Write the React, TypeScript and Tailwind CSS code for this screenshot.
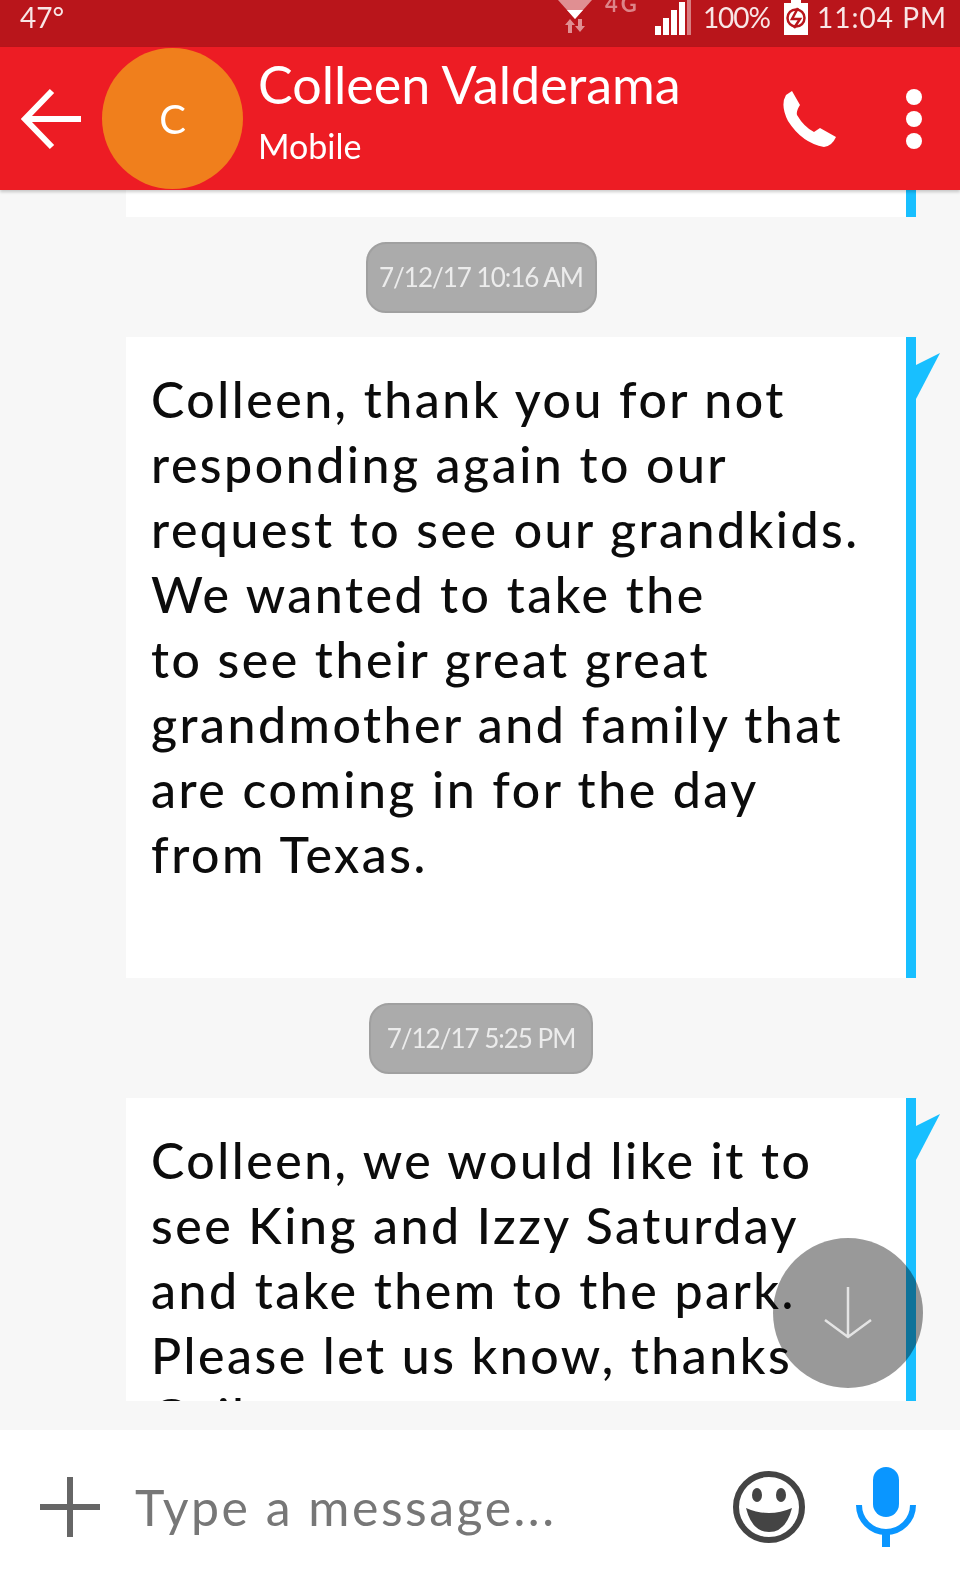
const FONT = "font-['Lato','Liberation_Sans',sans-serif]";

function Timestamp({ label, width }: { label: string; width: string }) {
  return (
    <div className="flex justify-center pl-[2px] pt-[25px] pb-[24px]">
      <div className={`${width} h-[71px] flex items-center justify-center whitespace-nowrap rounded-[20px] bg-[#ababab] border-2 border-[#a0a0a0] text-[#ececec] text-[26px] tracking-[-1px]`}>
        {label}
      </div>
    </div>
  );
}

function Tail() {
  return (
    <svg className="absolute left-full top-[16px] w-[26px] h-[46px]" viewBox="0 0 26 46">
      <path d="M0 12 L24 0 L0 46 Z" fill="#18bfff" />
    </svg>
  );
}

function Bubble({ lines, cut }: { lines: string[]; cut?: boolean }) {
  return (
    <div className="flex ml-[126px] w-[790px] relative">
      <div className={`flex-1 bg-white pl-[25px] pt-[30px] ${cut ? "h-[303px] overflow-hidden" : "h-[641px]"}`}>
        {lines.map((l) => (
          <div key={l} className={`h-[65px] leading-[65px] text-[50px] font-medium tracking-[2.5px] text-[#0c0c0c] whitespace-nowrap ${cut ? "last:-mt-[4px]" : ""}`}>
            {l}
          </div>
        ))}
      </div>
      <div className="w-[10px] bg-[#18bfff] relative">
        <Tail />
      </div>
    </div>
  );
}

function StatusBar() {
  return (
    <div className="h-[47px] shrink-0 bg-[#b9151b] flex items-start justify-between pl-[20px] pr-[13px] text-[#f8e6e6] text-[28px] leading-[34px]">
      <span>47°</span>
      <div className="flex items-start">
        <svg className="w-[36px] h-[34px] mr-[12px]" viewBox="0 0 36 34">
          <path d="M1 0 H35 L18 19 Z" fill="#e08f92" />
          <path d="M10 10 H26 L18 19 Z" fill="#fff" />
          <path d="M8 25 l5 -6 l5 6 h-3 v8 h-4 v-8 Z" fill="#e08f92" />
          <path d="M18 26 h3 v-7 h4 v7 h3 l-5 6 Z" fill="#e08f92" />
        </svg>
        <div className="w-[43px] h-[12px] mr-[7px] text-[#dd8488] text-[22px] leading-[8px] tracking-[3px] font-bold">4G</div>
        <svg className="w-[37px] h-[35px] mr-[11px]" viewBox="0 0 37 35" fill="#fff">
          <rect x="0" y="26" width="6" height="9" />
          <rect x="8" y="18" width="6" height="17" />
          <rect x="16" y="10" width="6" height="25" />
          <rect x="24" y="2" width="6" height="33" />
          <rect x="32" y="0" width="4" height="35" opacity="0.45" />
        </svg>
        <span className="mr-[14px] tracking-[-1px]">100%</span>
        <svg className="w-[24px] h-[35px] mr-[9px]" viewBox="0 0 24 35">
          <path d="M7 0 h10 v3 h7 v32 h-24 v-32 h7 Z" fill="#fff" />
          <circle cx="12" cy="18" r="8.5" fill="none" stroke="#b9151b" strokeWidth="2.5" />
          <path d="M14 8 L8 19 h8 L10 28" fill="none" stroke="#b9151b" strokeWidth="2.5" />
        </svg>
        <span className="tracking-[1px]">11:04 PM</span>
      </div>
    </div>
  );
}

function Header() {
  return (
    <header className="h-[143px] shrink-0 bg-[#ed1c24] flex items-center shadow-[0_2px_3px_rgba(0,0,0,0.2)] relative z-10 text-white">
      <svg className="w-[60px] h-[62px] ml-[21px] shrink-0" viewBox="0 0 60 62" fill="none" stroke="#fff" strokeWidth="6">
        <path d="M60 31 H5 M31 3 L4 31 L31 59" />
      </svg>
      <div className="w-[141px] h-[141px] ml-[21px] rounded-full bg-[#f07f1c] flex items-center justify-center text-[40px] shrink-0">
        C
      </div>
      <div className="ml-[15px] pb-[14px] flex-1 flex flex-col gap-[6px]">
        <span className="text-[52px] leading-[62px]">Colleen Valderama</span>
        <span className="text-[34px] leading-[50px]">Mobile</span>
      </div>
      <svg className="w-[54px] h-[56px] mr-[70px]" viewBox="0 0 54 56" fill="#fff">
        <path d="M10 0 L18 14 Q14 20 15 24 Q22 36 32 41 L38 37 L54 46 Q50 55 42 56 Q20 52 6 30 Q-2 14 4 4 Z" />
      </svg>
      <div className="flex flex-col gap-[6px] mr-[38px]">
        <div className="w-[16px] h-[16px] rounded-full bg-white" />
        <div className="w-[16px] h-[16px] rounded-full bg-white" />
        <div className="w-[16px] h-[16px] rounded-full bg-white" />
      </div>
    </header>
  );
}

function Composer() {
  return (
    <footer className="h-[146px] shrink-0 bg-white flex items-center pt-[8px]">
      <svg className="w-[60px] h-[60px] ml-[40px] shrink-0" viewBox="0 0 60 60" stroke="#666" strokeWidth="6">
        <path d="M30 0 V60 M0 30 H60" />
      </svg>
      <span className="ml-[35px] flex-1 text-[50px] tracking-[2.5px] text-[#777]">Type a message...</span>
      <svg className="w-[74px] h-[74px] shrink-0" viewBox="0 0 74 74">
        <circle cx="37" cy="37" r="33" fill="none" stroke="#444" strokeWidth="6" />
        <ellipse cx="25" cy="25" rx="5" ry="7" fill="#444" />
        <ellipse cx="49" cy="25" rx="5" ry="7" fill="#444" />
        <path d="M14 38 Q37 48 60 38 Q54 62 37 62 Q20 62 14 38 Z" fill="#444" />
      </svg>
      <svg className="w-[60px] h-[80px] ml-[50px] mr-[44px] shrink-0" viewBox="0 0 60 80">
        <rect x="17" y="0" width="26" height="50" rx="13" fill="#0a96ff" />
        <path d="M3 38 A27 27 0 0 0 57 38" fill="none" stroke="#0a96ff" strokeWidth="6" />
        <rect x="26" y="64" width="8" height="16" fill="#0a96ff" />
      </svg>
    </footer>
  );
}

export default function App() {
  return (
    <div className={`w-[960px] h-[1576px] flex flex-col bg-[#f7f7f7] relative overflow-hidden blur-[0.6px] ${FONT}`}>
      <StatusBar />
      <Header />

      <main className="flex-1 min-h-0 overflow-hidden">
        <div className="ml-[126px] w-[790px] h-[27px] flex">
          <div className="flex-1 bg-white" />
          <div className="w-[10px] bg-[#18bfff]" />
        </div>
        <Timestamp label="7/12/17 10:16 AM" width="w-[231px]" />
        <Bubble
          lines={[
            "Colleen, thank you for not",
            "responding again to our",
            "request to see our grandkids.",
            "We wanted to take the",
            "to see their great great",
            "grandmother and family that",
            "are coming in for the day",
            "from Texas.",
          ]}
        />
        <Timestamp label="7/12/17 5:25 PM" width="w-[224px]" />
        <Bubble
          cut
          lines={[
            "Colleen, we would like it to",
            "see King and Izzy Saturday",
            "and take them to the park.",
            "Please let us know, thanks",
            "Gail",
          ]}
        />
      </main>

      <Composer />

      <button className="absolute left-[773px] top-[1238px] w-[150px] h-[150px] rounded-full bg-black/40 flex items-center justify-center">
        <svg className="w-[50px] h-[52px]" viewBox="0 0 50 52" fill="none" stroke="#e4e4e4" strokeWidth="2.5">
          <path d="M25 0 V50 M2 33 L25 50 L48 33" />
        </svg>
      </button>
    </div>
  );
}
